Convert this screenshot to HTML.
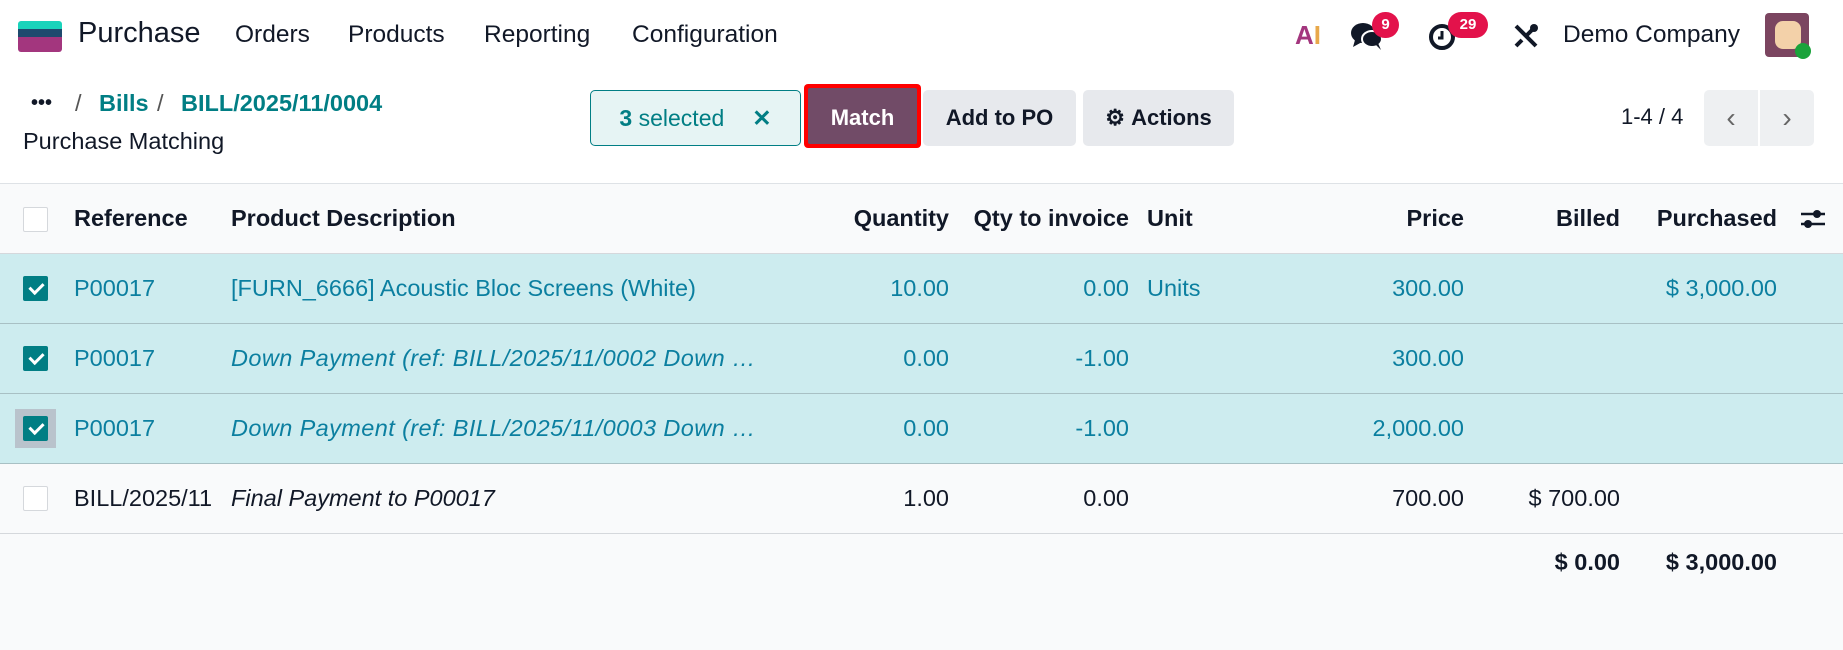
<!DOCTYPE html>
<html><head><meta charset="utf-8"><style>
*{box-sizing:border-box;margin:0;padding:0}
body{width:1843px;height:650px;background:#f9fafb;font-family:"Liberation Sans",sans-serif;color:#111827;position:relative;overflow:hidden}
.a{position:absolute;white-space:nowrap}
.top{position:absolute;left:0;top:0;width:1843px;height:184px;background:#fff;border-bottom:1px solid #dee2e6}
.btn{position:absolute;top:90px;height:56px;border-radius:5px;background:#e7e9ed;font-weight:bold;font-size:22px;display:flex;align-items:center;justify-content:center;color:#111827}
.row{position:absolute;left:0;width:1843px;height:70px;border-bottom:1px solid #a8c0c4}
.sel{background:#cdecef}
.cell{position:absolute;top:0;line-height:69px;font-size:23.5px;white-space:nowrap}
.r{text-align:right}
.blue{color:#0b7fa0}
.cb{position:absolute;left:23px;top:22px;width:25px;height:25px;border:1px solid #d5d8dc;background:#fff;border-radius:2px}
.cb.on{background:#017e84;border-color:#017e84}
.cb.on:after{content:"";position:absolute;left:8px;top:3px;width:6px;height:11px;border:solid #fff;border-width:0 3px 3px 0;transform:rotate(45deg)}
.badge{position:absolute;background:#e3124b;color:#fff;font-size:15px;font-weight:bold;border-radius:13px;height:26px;line-height:26px;text-align:center}
</style></head><body>
<div class="top"></div>
<div class="a" style="left:18px;top:21px;width:44px;height:31px;border-radius:3px;overflow:hidden">
<div style="height:8px;background:#1ad3bb"></div><div style="height:8px;background:#1e4a6e"></div><div style="height:15px;background:#a3367e"></div></div>
<div class="a" style="left:78px;top:17px;font-size:29px">Purchase</div>
<div class="a" style="left:235px;top:21px;font-size:24.5px">Orders</div>
<div class="a" style="left:348px;top:21px;font-size:24.5px">Products</div>
<div class="a" style="left:484px;top:21px;font-size:24.5px">Reporting</div>
<div class="a" style="left:632px;top:21px;font-size:24.5px">Configuration</div>
<div class="a" style="left:1295px;top:20px;font-size:26px;font-weight:bold;color:#a3367e">A<span style="color:#e8a84a">I</span></div>
<svg class="a" style="left:1350px;top:20px" width="34" height="32" viewBox="0 0 34 32"><ellipse cx="13" cy="13" rx="12" ry="10" fill="#111827"/><path d="M5 20 L3 27 L12 22Z" fill="#111827"/><ellipse cx="22" cy="19" rx="10" ry="8" fill="#111827" stroke="#fff" stroke-width="2"/><path d="M26 25 L31 30 L28 23Z" fill="#111827"/></svg>
<div class="badge" style="left:1372px;top:12px;width:27px">9</div>
<svg class="a" style="left:1428px;top:22px" width="30" height="30" viewBox="0 0 30 30"><circle cx="14" cy="15" r="11" fill="none" stroke="#111827" stroke-width="4"/><path d="M14 9v7h-4" stroke="#111827" stroke-width="3" fill="none"/></svg>
<div class="badge" style="left:1448px;top:12px;width:40px">29</div>
<svg class="a" style="left:1512px;top:22px" width="28" height="28" viewBox="0 0 28 28"><path d="M4 4 L24 24 M24 4 L14 14 M4 24 L10 18" stroke="#111827" stroke-width="4" fill="none"/><circle cx="22" cy="6" r="4" fill="#111827"/></svg>
<div class="a" style="left:1563px;top:21px;font-size:24.5px">Demo Company</div>
<div class="a" style="left:1765px;top:13px;width:44px;height:44px;border-radius:4px;background:#7b4560"></div>
<div class="a" style="left:1775px;top:21px;width:26px;height:28px;border-radius:8px;background:#f3d1a9"></div>
<div class="a" style="left:1795px;top:43px;width:16px;height:16px;border-radius:50%;background:#1aa33b"></div>
<div class="a" style="left:31px;top:92px;font-size:20px;font-weight:bold">•••</div>
<div class="a" style="left:75px;top:90px;font-size:23.5px;color:#555">/</div>
<div class="a" style="left:99px;top:90px;font-size:23.5px;font-weight:bold;color:#017e84">Bills</div>
<div class="a" style="left:157px;top:90px;font-size:23.5px;color:#555">/</div>
<div class="a" style="left:181px;top:90px;font-size:23.5px;font-weight:bold;color:#017e84">BILL/2025/11/0004</div>
<div class="a" style="left:23px;top:128px;font-size:23.5px">Purchase Matching</div>
<div class="btn" style="left:590px;width:211px;background:#e6f4f4;border:1px solid #017e84;color:#017e84;font-weight:normal;font-size:23px"><b>3</b>&nbsp;selected<span style="margin-left:28px;font-weight:bold">✕</span></div>
<div class="btn" style="left:804px;top:84px;width:117px;height:64px;background:#ff0000;border-radius:4px"></div>
<div class="btn" style="left:808px;top:88px;width:109px;height:56px;background:#714b67;color:#fff;border-radius:2px;padding-top:4px">Match</div>
<div class="btn" style="left:923px;width:153px">Add to PO</div>
<div class="btn" style="left:1083px;width:151px">⚙&nbsp;Actions</div>
<div class="a" style="left:1621px;top:104px;font-size:22px">1-4 / 4</div>
<div class="btn" style="left:1704px;width:54px;border-radius:5px 0 0 5px;background:#eef0f2;font-weight:normal;color:#666;font-size:28px">‹</div>
<div class="btn" style="left:1760px;width:54px;border-radius:0 5px 5px 0;background:#eef0f2;font-weight:normal;color:#666;font-size:28px">›</div>
<div class="row" style="top:184px;height:70px;border-bottom:1px solid #d5d8dc;font-weight:bold">
<div class="cb" style="top:23px"></div>
<div class="cell" style="left:74px;font-weight:bold">Reference</div>
<div class="cell" style="left:231px;font-weight:bold">Product Description</div>
<div class="cell r" style="right:894px;font-weight:bold">Quantity</div>
<div class="cell r" style="right:714px;font-weight:bold">Qty to invoice</div>
<div class="cell" style="left:1147px;font-weight:bold">Unit</div>
<div class="cell r" style="right:379px;font-weight:bold">Price</div>
<div class="cell r" style="right:223px;font-weight:bold">Billed</div>
<div class="cell r" style="right:66px;font-weight:bold">Purchased</div>
<svg class="a" style="left:1800px;top:25px" width="26" height="20" viewBox="0 0 26 20"><path d="M1 5h24M1 15h24" stroke="#111827" stroke-width="2.5"/><circle cx="17" cy="5" r="4" fill="#111827"/><circle cx="8" cy="15" r="4" fill="#111827"/></svg>
</div>
<div class="row sel blue" style="top:254px">
<div class="cb on"></div>
<div class="cell" style="left:74px">P00017</div>
<div class="cell" style="left:231px">[FURN_6666] Acoustic Bloc Screens (White)</div>
<div class="cell r" style="right:894px">10.00</div><div class="cell r" style="right:714px">0.00</div>
<div class="cell" style="left:1147px">Units</div>
<div class="cell r" style="right:379px">300.00</div><div class="cell r" style="right:66px">$ 3,000.00</div>
</div>
<div class="row sel blue" style="top:324px">
<div class="cb on"></div>
<div class="cell" style="left:74px">P00017</div>
<div class="cell" style="left:231px;font-style:italic;letter-spacing:0.4px">Down Payment (ref: BILL/2025/11/0002 Down …</div>
<div class="cell r" style="right:894px">0.00</div><div class="cell r" style="right:714px">-1.00</div>
<div class="cell r" style="right:379px">300.00</div>
</div>
<div class="row sel blue" style="top:394px">
<div class="a" style="left:15px;top:15px;width:41px;height:39px;background:#b9c3cc"></div>
<div class="cb on"></div>
<div class="cell" style="left:74px">P00017</div>
<div class="cell" style="left:231px;font-style:italic;letter-spacing:0.4px">Down Payment (ref: BILL/2025/11/0003 Down …</div>
<div class="cell r" style="right:894px">0.00</div><div class="cell r" style="right:714px">-1.00</div>
<div class="cell r" style="right:379px">2,000.00</div>
</div>
<div class="row" style="top:464px;border-bottom:1px solid #d5d8dc">
<div class="cb"></div>
<div class="cell" style="left:74px">BILL/2025/11</div>
<div class="cell" style="left:231px;font-style:italic">Final Payment to P00017</div>
<div class="cell r" style="right:894px">1.00</div><div class="cell r" style="right:714px">0.00</div>
<div class="cell r" style="right:379px">700.00</div><div class="cell r" style="right:223px">$ 700.00</div>
</div>
<div class="a" style="right:223px;top:549px;font-size:23.5px;font-weight:bold">$ 0.00</div>
<div class="a" style="right:66px;top:549px;font-size:23.5px;font-weight:bold">$ 3,000.00</div>
</body></html>
